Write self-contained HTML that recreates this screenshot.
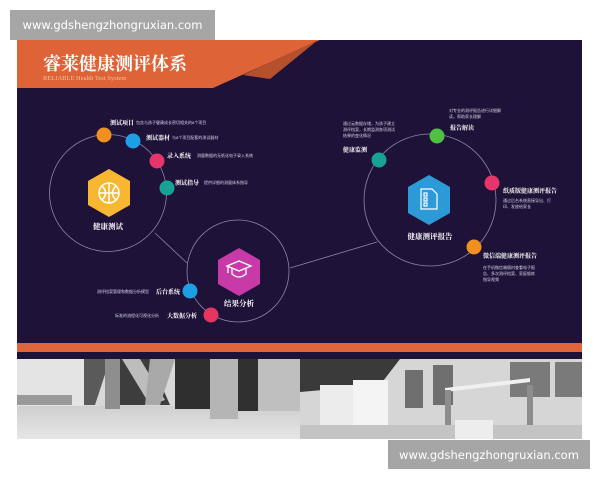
<!DOCTYPE html>
<html><head><meta charset="utf-8"><style>
html,body{margin:0;padding:0;background:#fff;width:600px;height:480px;overflow:hidden;position:relative}
.wm{position:absolute;background:#a6a6a6;color:#fff;font-family:"DejaVu Sans","Liberation Sans",sans-serif;font-size:11.5px;line-height:30px;text-align:center}
svg{position:absolute;left:0;top:0}
.t{font-family:"Liberation Serif","Noto Serif CJK SC",serif;fill:#fff;font-weight:bold}
.s{font-family:"Liberation Sans","Noto Sans CJK SC",sans-serif;fill:#d8d4e6;font-size:4px}
</style></head><body>
<svg width="600" height="480" viewBox="0 0 600 480">
<defs>
<linearGradient id="fl" x1="0" y1="0" x2="0" y2="1"><stop offset="0" stop-color="#cfcfcf"/><stop offset="1" stop-color="#e6e6e6"/></linearGradient>
</defs>
<rect x="17" y="40" width="565" height="319" fill="#1e1238"/>
<polygon points="17,40 320,40 213,88 17,88" fill="#de6337"/>
<polygon points="243,75 318,40 270,79" fill="#b5502c"/>
<text x="43" y="70" class="t" font-size="18">睿莱健康测评体系</text>
<text x="43" y="80" font-family="Liberation Serif,serif" font-size="6.5" fill="#f4c0a4">RELIABLE Health Test System</text>
<rect x="17" y="343" width="565" height="9" fill="#e0643a"/>

<g fill="none" stroke="#8d86a8" stroke-width="0.8">
<circle cx="108" cy="193" r="58.5"/>
<circle cx="238" cy="271" r="51"/>
<circle cx="430" cy="200" r="66"/>
<line x1="155" y1="233" x2="187" y2="263"/>
<line x1="290" y1="268" x2="377" y2="242"/>
</g>
<g>
<circle cx="104" cy="135" r="7.5" fill="#f0901e"/>
<circle cx="133" cy="141" r="7.5" fill="#1d9fe6"/>
<circle cx="157" cy="161" r="7.5" fill="#e6356a"/>
<circle cx="167" cy="188" r="7.5" fill="#17a392"/>
<circle cx="190" cy="291" r="7.5" fill="#1d9fe6"/>
<circle cx="211" cy="315" r="7.5" fill="#e6355f"/>
<circle cx="437" cy="136" r="7.5" fill="#4ec042"/>
<circle cx="379" cy="160" r="7.5" fill="#17a392"/>
<circle cx="492" cy="183" r="7.5" fill="#e6356a"/>
<circle cx="474" cy="247" r="7.5" fill="#f0901e"/>
</g>
<polygon points="109,169 130,181 130,205 109,217 88,205 88,181" fill="#f7b731"/>
<g fill="none" stroke="#fff" stroke-width="1.5"><circle cx="109" cy="193" r="10"/><path d="M99,193h20M109,183v20M102,186q7,7 0,14M116,186q-7,7 0,14"/></g>
<polygon points="239,248 260,260 260,284 239,296 218,284 218,260" fill="#c83aa8"/>
<g fill="none" stroke="#fff" stroke-width="1.3"><path d="M227,266l12,-5l12,5l-12,5z"/><path d="M232,268v6q7,6 14,0v-6"/><path d="M228,267v6"/></g>
<polygon points="429,175 450,187 450,213 429,225 408,213 408,187" fill="#2d9ad8"/>
<g fill="none" stroke="#fff" stroke-width="1.2"><path d="M421,189h11l5,5v15h-16z"/><rect x="424" y="193" width="3" height="3"/><rect x="424" y="198" width="3" height="3"/><rect x="424" y="203" width="3" height="3"/></g>

<g class="t" font-size="7.5">
<text x="108" y="229" text-anchor="middle">健康测试</text>
<text x="239" y="306" text-anchor="middle">结果分析</text>
<text x="430" y="239" text-anchor="middle">健康测评报告</text>
</g>
<g class="t" font-size="6">
<text x="110" y="125">测试项目</text>
<text x="146" y="140">测试器材</text>
<text x="167" y="158">录入系统</text>
<text x="175" y="185">测试指导</text>
<text x="180" y="294" text-anchor="end">后台系统</text>
<text x="197" y="318" text-anchor="end">大数据分析</text>
<text x="450" y="130">报告解读</text>
<text x="343" y="152">健康监测</text>
<text x="503" y="193">纸质版健康测评报告</text>
<text x="483" y="258">微信端健康测评报告</text>
</g>
<g class="s">
<text x="136" y="124">包含与孩子健康成长密切相关的8个项目</text>
<text x="172" y="139">与8个项目配套的测试器材</text>
<text x="197" y="157">测量数据的无纸化电子录入系统</text>
<text x="204" y="184">提供详细的测量体系指导</text>
<text x="149" y="293" text-anchor="end">测评档案管理和数据分析模型</text>
<text x="159" y="317" text-anchor="end">标准的流程化可视化分析</text>
<text x="449" y="112">对专业的测评报告进行详细解</text>
<text x="449" y="118">读，帮助家长理解</text>
<text x="343" y="125">通过云数据存储，为孩子建立</text>
<text x="343" y="131">测评档案，长期监测各项测试</text>
<text x="343" y="137">结果的变化情况</text>
<text x="503" y="202">通过后台系统直接导出、打</text>
<text x="503" y="208">印、发放给家长</text>
<text x="483" y="269">在手机微信端随时查看电子报</text>
<text x="483" y="275">告、多次测评档案、家庭锻炼</text>
<text x="483" y="281">指导视频</text>
</g>

<rect x="17" y="359" width="565" height="80" fill="#d8d8d8"/>
<rect x="17" y="359" width="67" height="50" fill="#e4e4e4"/>
<rect x="17" y="406" width="283" height="33" fill="url(#fl)"/>
<polygon points="84,359 110,359 95,405 84,405" fill="#5a5a5a"/>
<rect x="105" y="359" width="15" height="50" fill="#8e8e8e"/>
<polygon points="120,359 150,359 170,405 120,405" fill="#3d3d3d"/>
<polygon points="122,359 140,359 165,400 150,405" fill="#bdbdbd"/>
<polygon points="150,359 175,359 160,405 145,405" fill="#a8a8a8"/>
<rect x="175" y="359" width="35" height="50" fill="#2f2f2f"/>
<rect x="210" y="359" width="28" height="60" fill="#b5b5b5"/>
<rect x="238" y="359" width="20" height="52" fill="#303030"/>
<rect x="258" y="359" width="42" height="52" fill="#bfbfbf"/>
<rect x="17" y="395" width="55" height="10" fill="#9a9a9a"/>
<rect x="300" y="359" width="282" height="80" fill="#d6d6d6"/>
<polygon points="300,359 400,359 380,385 300,392" fill="#3a3a3a"/>
<rect x="320" y="385" width="50" height="45" fill="#ececec"/>
<rect x="353" y="380" width="35" height="50" fill="#f4f4f4"/>
<rect x="405" y="370" width="18" height="38" fill="#6f6f6f"/>
<rect x="433" y="365" width="20" height="40" fill="#6f6f6f"/>
<rect x="510" y="362" width="40" height="35" fill="#7a7a7a"/>
<rect x="555" y="362" width="27" height="35" fill="#7a7a7a"/>
<polygon points="445,388 530,378 530,382 445,392" fill="#f0f0f0"/>
<rect x="445" y="390" width="6" height="45" fill="#8d8d8d"/>
<rect x="527" y="385" width="6" height="45" fill="#8d8d8d"/>
<rect x="300" y="425" width="282" height="14" fill="#c4c4c4"/>
<rect x="455" y="420" width="38" height="19" fill="#ededed"/>
</svg>
<div class="wm" style="left:10px;top:10px;width:205px;height:30px">www.gdshengzhongruxian.com</div>
<div class="wm" style="left:388px;top:440px;width:202px;height:29px">www.gdshengzhongruxian.com</div>
</body></html>
